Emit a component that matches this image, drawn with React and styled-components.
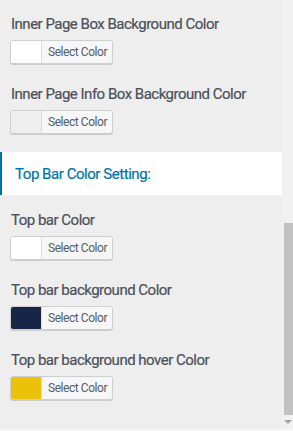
import React from 'react';
import styled, { createGlobalStyle } from 'styled-components';

const GlobalStyle = createGlobalStyle`
	html, body {
		margin: 0;
		padding: 0;
		background: #eeeeee;
	}
	* {
		box-sizing: border-box;
	}
`;

const Page = styled.div`
	display: flex;
	height: 431px;
	overflow: hidden;
	background: #eeeeee;
	font-family: Roboto, 'Noto Sans', sans-serif;
	border-bottom: 2px solid #f7f7f7;
`;

const Main = styled.div`
	flex: 1;
	display: flex;
	flex-direction: column;
	padding-top: 14px;
`;

const Field = styled.div`
	display: flex;
	flex-direction: column;
	align-items: flex-start;
	padding: 0 10px;
	margin-bottom: ${(p) => (p.last ? 0 : 20)}px;
`;

const Label = styled.div`
	font-size: 15px;
	line-height: 20px;
	font-weight: 400;
	letter-spacing: -0.5px;
	color: #4a5159;
	padding-left: 1px;
	margin-bottom: 6px;
	-webkit-text-stroke: 0.2px #4a5159;
`;

const ColorButton = styled.button`
	display: flex;
	align-items: stretch;
	height: 24px;
	padding: 0;
	border: 1px solid #cfcfcf;
	border-radius: 3px;
	background: #f7f7f7;
	box-shadow: 0 1px 0 #cccccc;
	overflow: hidden;
	cursor: pointer;
	font-family: inherit;
`;

const Swatch = styled.span`
	width: 31px;
	background: ${(p) => p.color};
	border-right: 1px solid #dddddd;
`;

const ButtonText = styled.span`
	display: flex;
	align-items: center;
	padding: 0 5px 0 6px;
	font-size: 12px;
	letter-spacing: -0.45px;
	color: #555d66;
`;

const SectionHeader = styled.div`
	display: flex;
	align-items: center;
	height: 43px;
	margin: 18px 0 15px;
	padding-left: 13px;
	background: #ffffff;
	border-left: 2px solid #0073aa;
	font-size: 15px;
	font-weight: 400;
	letter-spacing: -0.45px;
	color: #0073aa;
	-webkit-text-stroke: 0.2px #0073aa;
`;

const Scrollbar = styled.div`
	width: 11px;
	display: flex;
	flex-direction: column;
	align-items: flex-end;
	background: #f1f1f1;
`;

const Track = styled.div`
	height: 223px;
`;

const Thumb = styled.div`
	width: 9px;
	height: 192px;
	background: #c1c1c1;
`;

const Arrow = styled.div`
	margin-top: 5px;
	width: 0;
	height: 0;
	margin-right: 1px;
	border-left: 4px solid transparent;
	border-right: 4px solid transparent;
	border-top: 4px solid #a3a3a3;
`;

const ColorField = ({ label, color, last }) => (
	<Field last={last}>
		<Label>{label}</Label>
		<ColorButton type="button">
			<Swatch color={color} />
			<ButtonText>Select Color</ButtonText>
		</ColorButton>
	</Field>
);

const App = () => {
	return (
		<>
			<GlobalStyle />
			<Page>
				<Main>
					<ColorField label="Inner Page Box Background Color" color="#ffffff" />
					<ColorField label="Inner Page Info Box Background Color" color="#eeeeee" last />
					<SectionHeader>Top Bar Color Setting:</SectionHeader>
					<ColorField label="Top bar Color" color="#ffffff" />
					<ColorField label="Top bar background Color" color="#172647" />
					<ColorField label="Top bar background hover Color" color="#ebc10a" last />
				</Main>
				<Scrollbar>
					<Track />
					<Thumb />
					<Arrow />
				</Scrollbar>
			</Page>
		</>
	);
};

export default App;
